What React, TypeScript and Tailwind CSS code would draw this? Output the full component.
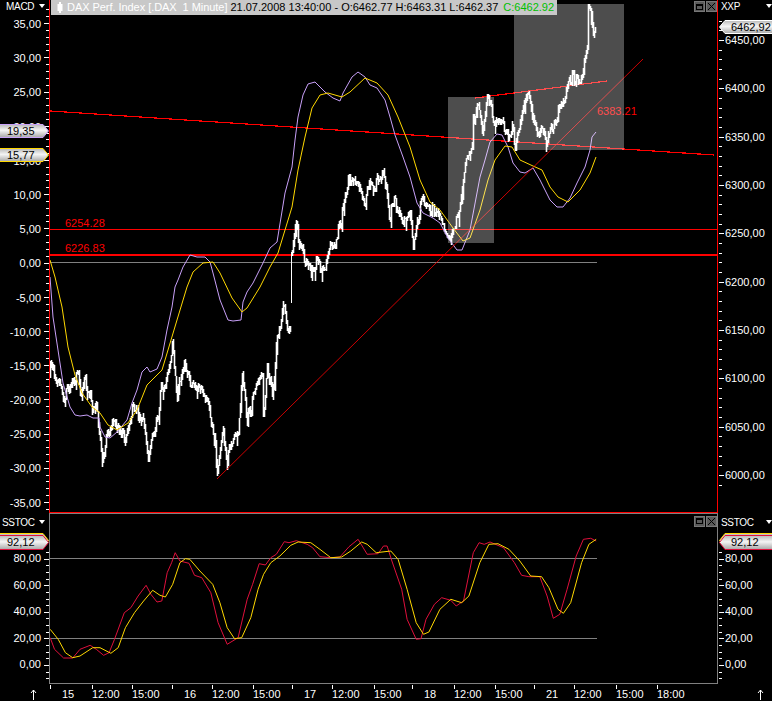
// DAX intraday chart window: MACD pane on top, slow stochastic below.
// All curve points are in page pixels, the svg viewBoxes are set up to match.

type Pt = [number, number];

const RED = "#ff0000";
const GRAY = "#808080";
const PURPLE = "#c8a0f8";
const YELLOW = "#ffd800";
const CRIMSON = "#e0103c";

const MACD_FAST: Pt[] = [
  [50, 277], [53, 317], [58, 350], [63, 383], [70, 407], [75, 415], [80, 416], [87, 415], [93, 418], [99, 418],
  [100, 427], [105, 437], [110, 438], [117, 432], [127, 420], [132, 403], [137, 390], [142, 372], [147, 367],
  [150, 372], [157, 369], [162, 357], [167, 330], [172, 307], [175, 287], [178, 280], [183, 267], [190, 255],
  [197, 257], [205, 257], [210, 262], [213, 273], [220, 300], [228, 320], [233, 321], [241, 320], [243, 302],
  [247, 292], [253, 283], [263, 263], [270, 248], [277, 242], [285, 193], [292, 167], [295, 140], [298, 117],
  [303, 95], [308, 84], [315, 82], [325, 92], [333, 98], [340, 101], [343, 93], [352, 77], [358, 72], [365, 77],
  [370, 85], [377, 88], [385, 100], [390, 117], [395, 135], [403, 157], [410, 177], [417, 203], [423, 213],
  [433, 218], [440, 223], [448, 238], [457, 250], [462, 250], [470, 230], [480, 177], [485, 160], [490, 142],
  [497, 134], [502, 135], [508, 147], [513, 163], [520, 172], [525, 173], [533, 168], [540, 180], [550, 200],
  [557, 207], [563, 207], [570, 198], [577, 183], [585, 167], [590, 150], [592, 137], [596, 132],
];

const MACD_SLOW: Pt[] = [
  [50, 260], [55, 277], [62, 307], [68, 347], [75, 375], [82, 393], [92, 407], [100, 413], [108, 425], [117, 430],
  [128, 423], [137, 410], [147, 385], [162, 370], [168, 350], [177, 320], [187, 287], [193, 272], [203, 263],
  [213, 262], [220, 273], [232, 298], [242, 312], [247, 308], [260, 287], [270, 267], [278, 253], [292, 207],
  [298, 170], [305, 137], [312, 108], [320, 95], [328, 93], [342, 97], [350, 92], [365, 78], [377, 83], [388, 95],
  [398, 117], [410, 147], [420, 180], [430, 202], [440, 210], [453, 228], [463, 241], [470, 238], [480, 210],
  [488, 180], [495, 160], [505, 146], [512, 147], [520, 160], [533, 166], [542, 170], [550, 187], [558, 197],
  [568, 202], [580, 190], [590, 173], [596, 157],
];

// price runs in two pieces, there is a gap in the data at 291
const PRICE_A: Pt[] = [
  [50, 367], [57, 383], [63, 397], [68, 390], [73, 382], [78, 373], [80, 390], [85, 382], [90, 397], [92, 413],
  [95, 400], [100, 437], [102, 463], [105, 440], [113, 427], [118, 423], [125, 440], [132, 407], [138, 410],
  [143, 423], [147, 450], [148, 463], [152, 435], [157, 420], [161, 383], [165, 390], [172, 347], [177, 393],
  [183, 365], [190, 383], [197, 390], [203, 393], [208, 400], [212, 423], [215, 450], [217, 473], [223, 433],
  [227, 463], [233, 433], [238, 440], [242, 373], [247, 420], [255, 390], [262, 377], [263, 415], [267, 368],
  [272, 397], [274, 377], [276, 348], [283, 303], [287, 333], [291, 324],
];

const PRICE_B: Pt[] = [
  [292, 253], [296, 227], [303, 255], [310, 270], [317, 263], [325, 270], [330, 250], [335, 242], [338, 233],
  [343, 207], [347, 183], [353, 177], [360, 192], [365, 207], [369, 175], [375, 187], [383, 168], [387, 193],
  [390, 223], [392, 198], [398, 207], [403, 220], [410, 212], [413, 243], [417, 220], [423, 197], [430, 210],
  [437, 213], [443, 225], [450, 240], [453, 227], [460, 207], [465, 163], [472, 150], [473, 123], [477, 103],
  [482, 130], [488, 97], [493, 117], [500, 120], [507, 137], [512, 127], [516, 147], [518, 133], [527, 93],
  [532, 113], [537, 133], [542, 123], [545, 140], [550, 130], [557, 117], [565, 100], [570, 78], [580, 82],
  [587, 50], [588, 6], [591, 13], [593, 33], [596, 25],
];

const STOCH_K_RAW: Pt[] = [
  [28, 395], [40, 430], [65, 456], [90, 456], [110, 430], [138, 418], [155, 430], [175, 448], [190, 440], [205, 400],
  [232, 320], [250, 305], [270, 270], [292, 238], [305, 265], [322, 288], [335, 285], [350, 200], [362, 170],
  [372, 140], [385, 165], [410, 172], [425, 208], [445, 215], [470, 260], [490, 350], [515, 415], [545, 395],
  [570, 280], [585, 235], [603, 173], [620, 177], [635, 155], [650, 145], [672, 107], [685, 110], [705, 104],
  [735, 115], [750, 125], [770, 152], [800, 155], [825, 153], [850, 122], [875, 100], [900, 145], [930, 143],
  [945, 120], [955, 120], [968, 165], [995, 250], [1010, 340], [1035, 400], [1048, 398], [1062, 340], [1085, 295],
  [1105, 275], [1130, 283], [1145, 300], [1165, 285], [1192, 140], [1208, 110], [1222, 115], [1238, 108],
  [1275, 125], [1305, 170], [1325, 208], [1345, 212], [1375, 212], [1395, 270], [1412, 337], [1430, 325],
  [1450, 250], [1475, 150], [1495, 100], [1515, 97], [1530, 105],
];

const STOCH_D_RAW: Pt[] = [
  [28, 370], [50, 400], [70, 440], [90, 455], [110, 450], [145, 425], [165, 425], [195, 442], [215, 425], [235, 365],
  [260, 320], [285, 285], [310, 253], [330, 268], [345, 273], [365, 235], [385, 170], [400, 158], [412, 160],
  [440, 195], [475, 235], [495, 290], [515, 365], [535, 398], [555, 395], [580, 335], [600, 250], [615, 205],
  [635, 170], [660, 150], [690, 118], [710, 108], [745, 110], [770, 130], [800, 155], [830, 153], [855, 135],
  [885, 108], [900, 115], [925, 140], [965, 135], [985, 160], [1010, 250], [1035, 350], [1055, 385], [1070, 378],
  [1100, 310], [1130, 280], [1160, 290], [1180, 270], [1210, 170], [1235, 115], [1260, 113], [1290, 130],
  [1320, 165], [1350, 210], [1380, 212], [1400, 245], [1425, 310], [1440, 322], [1460, 290], [1490, 170],
  [1510, 115], [1530, 100],
];

// stochastic points were read off a crop, bring them to page pixels
const toPage = (pts: Pt[]): Pt[] => pts.map(([x, y]) => [40 + x / 2.751, 506 + y / 3]);

const polyline = (pts: Pt[]) => pts.map(([x, y]) => `${x.toFixed(1)},${y.toFixed(1)}`).join(" ");

// one high-low bar per pixel, seeded noise around the traced path
function priceBars(trace: Pt[], seed: number): string {
  let s = seed;
  const rnd = () => {
    s = (s * 1664525 + 1013904223) % 4294967296;
    return s / 4294967296;
  };
  let d = "";
  let prev = trace[0][1];
  let wobble = 0;
  for (let i = 0; i < trace.length - 1; i++) {
    const [x0, y0] = trace[i];
    const [x1, y1] = trace[i + 1];
    for (let x = x0; x < x1; x++) {
      if (x % 2 === 0) wobble = (rnd() - 0.5) * 12;
      const y = y0 + ((y1 - y0) * (x - x0)) / (x1 - x0) + wobble;
      const spike = rnd() > 0.82 ? 12 : 4;
      const top = Math.min(prev, y) - rnd() * 4;
      const bottom = Math.max(prev, y) + rnd() * spike;
      d += `M${x + 0.5} ${top.toFixed(0)}V${bottom.toFixed(0)}`;
      prev = y;
    }
  }
  return d;
}

function range(from: number, to: number, step: number): number[] {
  const out: number[] = [];
  for (let v = from; step > 0 ? v <= to + 0.001 : v >= to - 0.001; v += step) out.push(v);
  return out;
}

const macdY = (v: number) => 262.5 - 6.84 * v;
const xxpY = (v: number) => 40 + ((6450 - v) * 48.33) / 50;
const stochY = (v: number) => 665 - 1.33 * v;

const comma = (v: number) => v.toFixed(2).replace(".", ",");

const MACD_LABELS = range(35, -35, -5);
const XXP_LABELS = range(6450, 6000, -50);
const STOCH_LABELS = range(80, 0, -20);

const LOW_PANE = 513;

function Ticks({ side, paneTop, height, major, minor }: { side: "left" | "right"; paneTop: number; height: number; major: number[]; minor: number[] }) {
  const width = side === "left" ? 49 : 54;
  const xMajor = side === "left" ? [44, 49] : [1, 6];
  const xMinor = side === "left" ? [46, 49] : [1, 4];
  return (
    <svg className="absolute left-0 top-0" width={width} height={height} viewBox={`0 ${paneTop} ${width} ${height}`} shapeRendering="crispEdges">
      {minor.map((y) => (
        <line key={y} x1={xMinor[0]} x2={xMinor[1]} y1={Math.round(y) + 0.5} y2={Math.round(y) + 0.5} stroke="#fff" />
      ))}
      {major.map((y) => (
        <line key={y} x1={xMajor[0]} x2={xMajor[1]} y1={Math.round(y) + 0.5} y2={Math.round(y) + 0.5} stroke="#fff" />
      ))}
    </svg>
  );
}

function Tag({ id, value, color, side, top, h }: { id: string; value: string; color: string; side: "left" | "right"; top: number; h: number }) {
  const w = side === "left" ? 49 : 53;
  const points =
    side === "left"
      ? `-2,0.5 ${w - 6},0.5 ${w - 0.5},${h / 2} ${w - 6},${h - 0.5} -2,${h - 0.5}`
      : `${w + 2},0.5 6,0.5 0.5,${h / 2} 6,${h - 0.5} ${w + 2},${h - 0.5}`;
  return (
    <div
      className={`absolute text-black leading-none flex items-center ${side === "left" ? "left-0 pl-[7px]" : "left-[1px] pl-[12px]"}`}
      style={{ top, width: w, height: h }}
    >
      <svg className="absolute left-0 top-0" width={w} height={h}>
        <defs>
          <linearGradient id={id} x1="0" x2="0" y1="0" y2="1">
            <stop offset="0" stopColor="#b8b8b8" />
            <stop offset="0.45" stopColor="#f4f4f4" />
            <stop offset="1" stopColor="#a8a8a8" />
          </linearGradient>
        </defs>
        <polygon points={points} fill={`url(#${id})`} stroke={color} />
      </svg>
      <span className="relative">{value}</span>
    </div>
  );
}

function Caret() {
  return (
    <svg className="mt-[3px] shrink-0" width="6" height="4" viewBox="0 0 6 4">
      <polygon points="0,0 6,0 3,4" fill="#fff" />
    </svg>
  );
}

function AxisHeader({ title, className }: { title: string; className: string }) {
  return (
    <div className={`flex justify-between items-start ${className}`}>
      <span className="text-[10px] tracking-[-0.3px] leading-[12px]">{title}</span>
      <Caret />
    </div>
  );
}

function WindowButtons() {
  return (
    <div className="flex gap-[1px] mt-[1px]">
      <div className="w-[11px] h-[11px] bg-[#5a5a5a] border border-[#777] flex items-center justify-center">
        <div className="w-[7px] h-[6px] border border-black border-t-2" />
      </div>
      <div className="w-[11px] h-[11px] bg-[#5a5a5a] border border-[#777]">
        <svg width="9" height="9" viewBox="0 0 9 9">
          <path d="M1 1L8 8M8 1L1 8" stroke="#000" strokeWidth="1" />
        </svg>
      </div>
    </div>
  );
}

function TitleBar() {
  return (
    <div className="h-[15px] w-[506px] bg-[#c8c8c8] flex items-center whitespace-pre text-black">
      <svg className="ml-[6px] mr-[4px]" width="6" height="11" viewBox="0 0 6 11">
        <rect x="2" y="0" width="2" height="11" fill="#fff" />
        <rect x="0.5" y="2" width="5" height="7" fill="#fff" />
      </svg>
      <span className="text-white tracking-[-0.05px]">DAX Perf. Index [.DAX  1 Minute]</span>
      <span className="ml-[3px]">21.07.2008 13:40:00 - O:6462.77 H:6463.31 L:6462.37</span>
      <span className="ml-[5px] text-[#00c000]">C:6462.92</span>
    </div>
  );
}

function MacdChart() {
  const labelClass = "font-['Liberation_Sans'] text-[11px]";
  return (
    <svg className="absolute left-0 top-0" width="667" height="512" viewBox="50 0 667 512">
      <g shapeRendering="crispEdges">
        <line x1="50" x2="597" y1="262.5" y2="262.5" stroke={GRAY} />
        <line x1="50" x2="717" y1="229.5" y2="229.5" stroke={RED} />
        <line x1="50" x2="717" y1="255" y2="255" stroke={RED} strokeWidth="2" />
        <line x1="291.5" x2="291.5" y1="252" y2="303" stroke="#fff" />
        <line x1="50" y1="111" x2="714" y2="155" stroke={RED} strokeWidth="1.2" />
        <line x1="475" y1="98" x2="607" y2="81" stroke={RED} strokeWidth="1.2" />
      </g>
      <path d={priceBars(PRICE_A, 7)} stroke="#fff" strokeWidth="1.6" fill="none" />
      <path d={priceBars(PRICE_B, 31)} stroke="#fff" strokeWidth="1.6" fill="none" />
      <polyline points={polyline(MACD_FAST)} fill="none" stroke={PURPLE} />
      <polyline points={polyline(MACD_SLOW)} fill="none" stroke={YELLOW} />
      <line x1="217" y1="479" x2="643" y2="59" stroke={RED} strokeWidth="0.8" />
      <text x="65" y="227" fill={RED} className={labelClass}>6254.28</text>
      <text x="65" y="252" fill={RED} className={labelClass}>6226.83</text>
      <text x="597" y="115" fill={RED} className={labelClass}>6383.21</text>
      {/* highlighted ranges sit over the curves, they wash out the lines a bit */}
      <rect x="448" y="97" width="46" height="146" fill="#fff" fillOpacity="0.3" />
      <rect x="514" y="4" width="110" height="146" fill="#fff" fillOpacity="0.3" />
    </svg>
  );
}

function StochChart() {
  return (
    <svg className="absolute left-0 top-0" width="667" height="170" viewBox="50 514 667 170">
      <g shapeRendering="crispEdges">
        <line x1="50" x2="597" y1="558.5" y2="558.5" stroke={GRAY} />
        <line x1="50" x2="597" y1="638.5" y2="638.5" stroke={GRAY} />
      </g>
      <polyline points={polyline(toPage(STOCH_K_RAW))} fill="none" stroke={CRIMSON} />
      <polyline points={polyline(toPage(STOCH_D_RAW))} fill="none" stroke={YELLOW} />
    </svg>
  );
}

// tick is the left edge of its cell, time labels start at the tick, day labels sit further in
const TIME_CELLS: { x: number; text: string; day?: boolean }[] = [
  { x: 50, text: "15", day: true }, { x: 92, text: "12:00" }, { x: 132, text: "15:00" },
  { x: 172, text: "16", day: true }, { x: 212, text: "12:00" }, { x: 253, text: "15:00" },
  { x: 292, text: "17", day: true }, { x: 332, text: "12:00" }, { x: 374, text: "15:00" },
  { x: 412, text: "18", day: true }, { x: 454, text: "12:00" }, { x: 495, text: "15:00" },
  { x: 534, text: "21", day: true }, { x: 574, text: "12:00" }, { x: 616, text: "15:00" }, { x: 657, text: "18:00" },
];

function UpArrow() {
  return (
    <svg width="7" height="10" viewBox="0 0 7 10">
      <path d="M3.5 0V10M1 3L3.5 0L6 3" stroke="#fff" fill="none" />
    </svg>
  );
}

export default function App() {
  return (
    <div className="w-[772px] h-[701px] bg-black flex flex-col overflow-hidden font-['Liberation_Sans',sans-serif] text-[11px] text-white">
      {/* MACD pane */}
      <div className="flex h-[512px]">
        <div className="relative w-[49px] overflow-hidden">
          <div className="h-[17px]">
            <AxisHeader title="MACD" className="pl-[6px] pr-[4px] pt-[1px]" />
          </div>
          <Ticks side="left" paneTop={0} height={512} major={MACD_LABELS.map(macdY)} minor={range(37, -36, -1).map(macdY)} />
          {MACD_LABELS.map((v) => (
            <div key={v} className="h-[34.2px] w-[41px] text-right leading-[14px]">{comma(v)}</div>
          ))}
          <Tag id="tagFast" side="left" value="19,35" color={PURPLE} top={124} h={14} />
          <Tag id="tagSlow" side="left" value="15,77" color={YELLOW} top={148} h={14} />
        </div>
        <div className="relative w-[669px] border-x border-[#ff0000]">
          <MacdChart />
          <div className="relative flex justify-between items-start pl-[1px]">
            <TitleBar />
            <WindowButtons />
          </div>
        </div>
        <div className="relative flex-1 overflow-hidden">
          <div className="h-[33px]">
            <AxisHeader title="XXP" className="pl-[3px] pt-[1px]" />
          </div>
          <Ticks side="right" paneTop={0} height={512} major={XXP_LABELS.map(xxpY)} minor={range(6470, 5990, -10).map(xxpY)} />
          {XXP_LABELS.map((v) => (
            <div key={v} className="h-[48.33px] pl-[7px] leading-[14px]">{comma(v)}</div>
          ))}
          <Tag id="tagPrice" side="right" value="6462,92" color="#ffffff" top={20} h={14} />
        </div>
      </div>

      {/* separator */}
      <div className="ml-[49px] w-[669px] h-[1px] bg-[#ff0000]" />

      {/* SSTOC pane */}
      <div className="flex h-[172px]">
        <div className="relative w-[49px] overflow-hidden">
          <div className="h-[38.5px]">
            <AxisHeader title="SSTOC" className="pl-[2px] pr-[4px] pt-[4px]" />
          </div>
          <Ticks side="left" paneTop={LOW_PANE} height={172} major={STOCH_LABELS.map(stochY)} minor={range(-10, 85, 5).map(stochY)} />
          {STOCH_LABELS.map((v) => (
            <div key={v} className="h-[26.6px] w-[41px] text-right leading-[14px]">{comma(v)}</div>
          ))}
          <Tag id="tagDBack" side="left" value="" color={YELLOW} top={20} h={15} />
          <Tag id="tagK" side="left" value="92,12" color={CRIMSON} top={22} h={15} />
        </div>
        <div className="relative w-[669px] border border-[#808080]">
          <StochChart />
          <div className="relative flex justify-end pt-[1px]">
            <WindowButtons />
          </div>
        </div>
        <div className="relative flex-1 overflow-hidden">
          <div className="h-[38.5px]">
            <AxisHeader title="SSTOC" className="pl-[3px] pt-[4px]" />
          </div>
          <Ticks side="right" paneTop={LOW_PANE} height={172} major={STOCH_LABELS.map(stochY)} minor={range(-10, 85, 5).map(stochY)} />
          {STOCH_LABELS.map((v) => (
            <div key={v} className="h-[26.6px] pl-[7px] leading-[14px]">{comma(v)}</div>
          ))}
          <Tag id="tagDBackR" side="right" value="" color={YELLOW} top={20} h={15} />
          <Tag id="tagKR" side="right" value="92,12" color={CRIMSON} top={22} h={15} />
        </div>
      </div>

      {/* time axis */}
      <div className="flex flex-1">
        <div className="w-[50px] flex justify-end items-end pr-[13px] pb-[1px]">
          <UpArrow />
        </div>
        {TIME_CELLS.map((c, i) => (
          <div key={c.x} className="flex flex-col" style={{ width: (TIME_CELLS[i + 1]?.x ?? 702) - c.x }}>
            <div className="w-[1px] h-[4px] mt-[1px] bg-white" />
            <div className={`leading-[14px] -mt-[2px] ${c.day ? "pl-[12px]" : ""}`}>{c.text}</div>
          </div>
        ))}
        <div className="flex-1 flex justify-end items-end pr-[8px] pb-[1px]">
          <UpArrow />
        </div>
      </div>
    </div>
  );
}
